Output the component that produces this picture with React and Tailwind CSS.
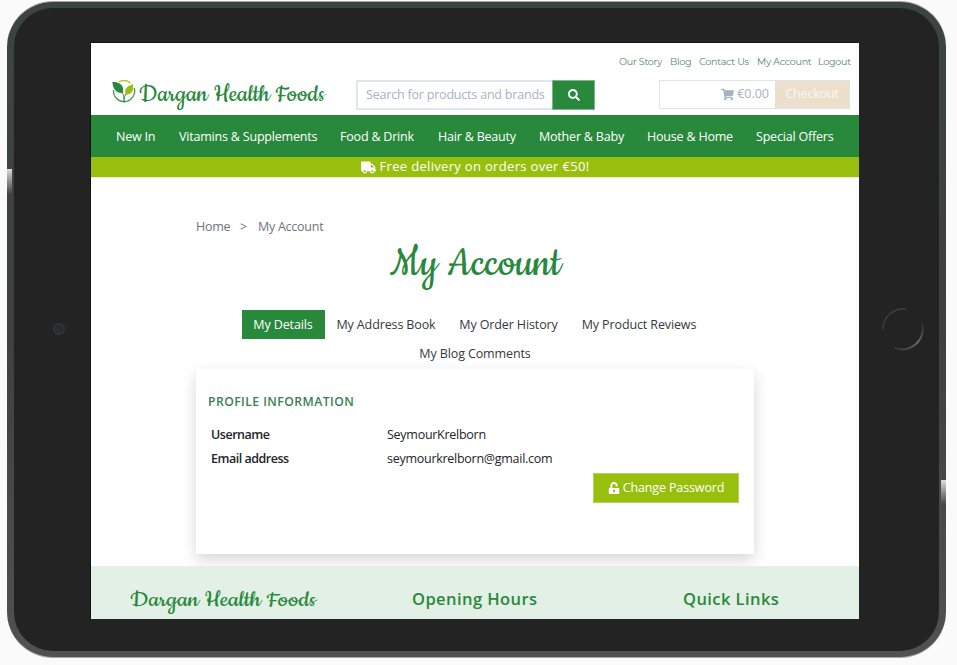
import { FaSearch, FaShoppingCart, FaTruck, FaUnlockAlt } from "react-icons/fa";

const topLinks = [
  ["Our Story", "w-[43px]"],
  ["Blog", "w-[21px]"],
  ["Contact Us", "w-[50px]"],
  ["My Account", "w-[53px]"],
  ["Logout", "w-[32px]"],
];

const navItems = [
  ["New In", "w-[63px]"],
  ["Vitamins & Supplements", "w-[161px]"],
  ["Food & Drink", "w-[98px]"],
  ["Hair & Beauty", "w-[101px]"],
  ["Mother & Baby", "w-[108px]"],
  ["House & Home", "w-[109px]"],
  ["Special Offers", "w-[80px]"],
];

const tabs = [
  ["My Details", "w-[83px] bg-[#28883c] text-white font-medium"],
  ["My Address Book", "w-[123px]"],
  ["My Order History", "w-[122px]"],
  ["My Product Reviews", "w-[139px]"],
  ["My Blog Comments", "w-[135px]"],
];

function Script({ text, width, height, size, baseline, className = "" }) {
  return (
    <svg width={width} height={height} className={"block overflow-visible " + className}>
      <text
        x="0"
        y={baseline}
        textLength={width}
        lengthAdjust="spacingAndGlyphs"
        fontSize={size}
        fill="#28883c"
        className="font-normal font-['Cookie','Liberation_Serif',cursive]"
      >
        {text}
      </text>
    </svg>
  );
}

function Leaf() {
  return (
    <svg width="24" height="24" viewBox="0 0 24 24" className="block shrink-0">
      <path d="M7 1.8A11 11 0 0 1 18.5 3" fill="none" stroke="#a9c93a" strokeWidth="1.5" />
      <path d="M1.5 10A10.6 10.6 0 1 0 22.2 8" fill="none" stroke="#4a9a5b" strokeWidth="1.3" />
      <path d="M0.3 2C6 1.6 10.5 4 11 8.5C11.4 11 11 12.4 10.5 13.2C7 13 1.2 12 0.3 2Z" fill="#28883c" />
      <path d="M21 4.3C22 10 20 14.7 13.6 14.8C12 9.5 15 5.8 21 4.3Z" fill="#98bf0d" />
      <path d="M10.5 13C11.8 15.5 12.2 18 12 22.5M12 22.5C11.8 18 13 15 14 14" fill="none" stroke="#28883c" strokeWidth="0.9" />
    </svg>
  );
}

function Header() {
  return (
    <header className="h-[72px] flex flex-col">
      <div className="h-[37px] pt-[10px] pr-[9px] flex justify-end gap-[8px] text-[9.6px] tracking-[-0.27px] leading-[18px] text-[#5c8573] font-['Montserrat','Open_Sans',sans-serif]">
        {topLinks.map(([t, w]) => (
          <a key={t} className={"whitespace-nowrap " + w}>{t}</a>
        ))}
      </div>
      <div className="flex items-start pl-[21px]">
        <div className="w-[244px] h-[31px] flex items-start">
          <Leaf />
          <Script text="Dargan Health Foods" width={186} height={30} size={27} baseline={21} className="ml-[3px]" />
        </div>
        <div className="w-[239px] h-[30px] flex text-[12.5px] tracking-[-0.2px]">
          <div className="w-[196px] border-2 border-r-0 border-[#e2e6ea] pl-[8px] leading-[26px] text-[#a6b3c2] whitespace-nowrap">
            Search for products and brands
          </div>
          <div className="w-[43px] bg-[#28883c] border border-[#7bb788] flex items-center justify-center text-white">
            <FaSearch size={12} />
          </div>
        </div>
        <div className="ml-[64px] w-[191px] h-[29px] flex text-[12.5px] tracking-[-0.2px] border border-[#dfe4e9]">
          <div className="flex-1 flex items-center justify-end pr-[6px] text-[#a6b3c2]">
            <FaShoppingCart size={13} className="mr-[3px]" />
            <span className="tracking-normal">€0.00</span>
          </div>
          <div className="w-[74px] bg-[#ecdfcb] text-[#faf8f4] flex items-center justify-center font-medium">Checkout</div>
        </div>
      </div>
    </header>
  );
}

function Profile() {
  return (
    <section className="mx-[105px] h-[185px] bg-white shadow-[0_6px_14px_rgba(0,0,0,0.16)] flex flex-col text-[12.5px] text-[#212529]">
      <h2 className="mt-[23px] ml-[12px] h-[20px] leading-[20px] text-[12.2px] font-semibold tracking-[0.44px] text-[#3b8055]">PROFILE INFORMATION</h2>
      <dl className="mt-[11px] ml-[15px] grid grid-cols-[176px_1fr] leading-[24px] tracking-[-0.27px]">
        <dt className="font-semibold tracking-[-0.48px]">Username</dt>
        <dd>SeymourKrelborn</dd>
        <dt className="font-semibold tracking-[-0.48px]">Email address</dt>
        <dd>seymourkrelborn@gmail.com</dd>
      </dl>
      <button className="self-end mt-[2px] mr-[15px] w-[146px] h-[30px] border border-[#b5d25a] bg-[#98bf0d] text-white text-[12.5px] tracking-[-0.13px] flex items-center justify-center gap-[3px] whitespace-nowrap">
        <FaUnlockAlt size={12} />
        Change Password
      </button>
    </section>
  );
}

export default function App() {
  return (
    <div className="relative w-[957px] h-[665px] bg-[#fafafa] pt-px pl-[7px] overflow-hidden font-['Open_Sans',sans-serif]">
      <div className="relative w-[939px] h-[657px] rounded-[46px] bg-gradient-to-b from-[#3b4441] via-[#3f3f3f] to-[#515151] border-y border-[#a8a8a8] p-[6px_7px]">
        <div className="w-[925px] h-[643px] rounded-[39px] bg-[#232323] pt-[35px] pl-[77px]">
          <main className="w-[768px] h-[576px] bg-white overflow-hidden shadow-[-1px_-1px_0_#131313]">
            <Header />
            <nav className="h-[42px] pt-[2px] bg-[#28883c] pl-[25px] flex items-center text-white text-[12.5px] tracking-[-0.2px]">
              {navItems.map(([t, w]) => (
                <a key={t} className={"whitespace-nowrap shrink-0 " + w}>{t}</a>
              ))}
            </nav>
            <div className="h-[21px] bg-[#98bf0d] border-b border-[#e8efd0] flex items-center justify-center gap-[4px] text-white text-[13px] tracking-[0.32px]">
              <FaTruck size={15} />
              Free delivery on orders over €50!
            </div>
            <div className="mt-[38px] h-[22px] ml-[105px] flex leading-[22px] text-[12.5px] tracking-[-0.26px] text-[#6c757d]">
              <span className="w-[44px]">Home</span>
              <span className="w-[18px]">&gt;</span>
              <span>My Account</span>
            </div>
            <h1 className="h-[72px] pl-[299px] pt-[4px]">
              <Script text="My Account" width={171} height={50} size={45} baseline={33} />
            </h1>
            <div className="mx-[105px] h-[59px] flex flex-wrap justify-center content-start text-[12.5px] tracking-[-0.12px] text-[#343a40]">
              {tabs.map(([t, c]) => (
                <a key={t} className={"h-[29px] leading-[29px] text-center whitespace-nowrap " + c}>{t}</a>
              ))}
            </div>
            <Profile />
            <footer className="mt-[12px] h-[53px] bg-[#e3f0e5] flex pl-[39px] text-[#28883c] text-[16.5px] leading-[66px] font-semibold tracking-[0.43px]">
              <div className="w-[282px] pt-[20px] tracking-normal font-normal">
                <Script text="Dargan Health Foods" width={186} height={30} size={25} baseline={20} />
              </div>
              <div className="w-[271px]">Opening Hours</div>
              <div>Quick Links</div>
            </footer>
          </main>
        </div>
        <div className="absolute left-0 top-[167px] w-[5px] h-[25px] bg-gradient-to-b from-[#dddddd] to-[#444444]" />
        <div className="absolute right-0 top-[478px] w-[5px] h-[25px] bg-gradient-to-b from-[#dddddd] to-[#444444]" />
        <svg width="14" height="14" className="absolute left-[45px] top-[320px]">
          <circle cx="7" cy="7" r="5" fill="#25252c" stroke="#34343b" strokeWidth="2" />
          <circle cx="7" cy="7.5" r="1.8" fill="none" stroke="#3a3a46" />
        </svg>
        <svg width="44" height="44" className="absolute left-[874px] top-[305px]" fill="none">
          <defs>
            <linearGradient id="ringLow" x1="0" y1="1" x2="1" y2="0">
              <stop offset="0" stopColor="#333" />
              <stop offset="0.55" stopColor="#6c6c6c" />
              <stop offset="1" stopColor="#2c2c2c" />
            </linearGradient>
          </defs>
          <path d="M13 40.5A20.5 20.5 0 0 0 41 16" stroke="url(#ringLow)" strokeWidth="1.8" />
          <path d="M2 22A20 20 0 0 1 25 2.2" stroke="#404040" strokeWidth="1.4" />
        </svg>
      </div>
    </div>
  );
}
